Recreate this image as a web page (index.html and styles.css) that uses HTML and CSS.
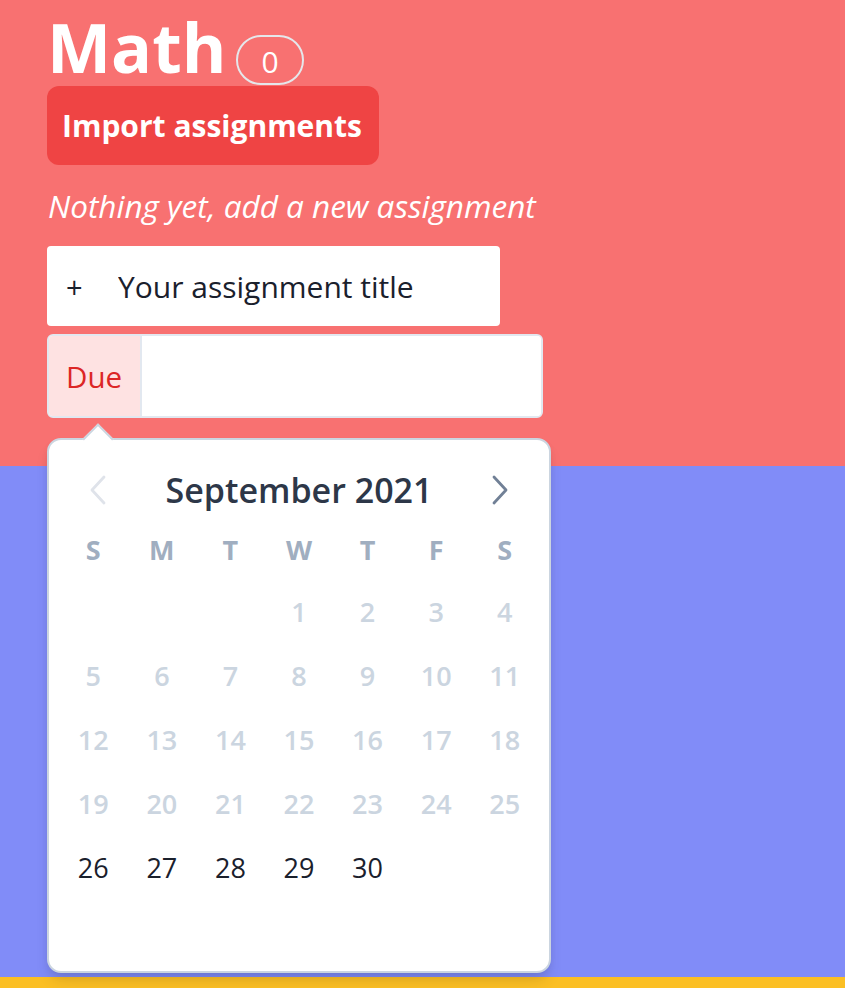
FILE: index.html
```html
<!DOCTYPE html>
<html lang="en">
<head>
<meta charset="utf-8">
<title>Math</title>
<link rel="stylesheet" href="styles.css">
</head>
<body>
<section class="subject subject-red">
  <div class="subject-head">
    <h1 class="subject-title">Math</h1>
    <span class="count-badge">0</span>
  </div>
  <button class="import-btn" type="button">Import assignments</button>
  <p class="empty-note">Nothing yet, add a new assignment</p>
  <form class="new-assignment">
    <label class="title-field">
      <span class="plus">+</span>
      <input class="title-input" type="text" placeholder="Your assignment title">
    </label>
    <div class="due-wrap">
      <div class="due-field">
        <span class="due-label">Due</span>
        <input class="due-input" type="text">
      </div>
      <div class="datepicker">
        <div class="dp-arrow"></div>
        <div class="dp-header">
          <button class="dp-nav dp-prev" type="button" aria-label="Previous month">
            <svg width="18" height="30" viewBox="0 0 18 30"><path d="M15 2 L3 15 L15 28" fill="none" stroke="currentColor" stroke-width="2.8" stroke-linecap="round" stroke-linejoin="round"/></svg>
          </button>
          <div class="dp-month">September 2021</div>
          <button class="dp-nav dp-next" type="button" aria-label="Next month">
            <svg width="18" height="30" viewBox="0 0 18 30"><path d="M3 2 L15 15 L3 28" fill="none" stroke="currentColor" stroke-width="2.8" stroke-linecap="round" stroke-linejoin="round"/></svg>
          </button>
        </div>
        <div class="dp-weekdays">
          <span>S</span><span>M</span><span>T</span><span>W</span><span>T</span><span>F</span><span>S</span>
        </div>
        <div class="dp-days">
          <span></span><span></span><span></span>
          <span class="off">1</span><span class="off">2</span><span class="off">3</span><span class="off">4</span>
          <span class="off">5</span><span class="off">6</span><span class="off">7</span><span class="off">8</span><span class="off">9</span><span class="off">10</span><span class="off">11</span>
          <span class="off">12</span><span class="off">13</span><span class="off">14</span><span class="off">15</span><span class="off">16</span><span class="off">17</span><span class="off">18</span>
          <span class="off">19</span><span class="off">20</span><span class="off">21</span><span class="off">22</span><span class="off">23</span><span class="off">24</span><span class="off">25</span>
          <span>26</span><span>27</span><span>28</span><span>29</span><span>30</span>
        </div>
      </div>
    </div>
  </form>
</section>
<section class="subject subject-blue"></section>
<section class="subject subject-yellow"></section>
</body>
</html>
```

FILE: styles.css
```css
* { box-sizing: border-box; }

html, body {
  margin: 0;
  padding: 0;
}

body {
  font-family: "Open Sans", "Noto Sans", sans-serif;
  color: #1a202c;
  overflow: hidden;
}

.subject {
  padding: 0 47px;
}

.subject-red {
  background: #f87171;
  height: 466px;
  padding-top: 7px;
  position: relative;
  z-index: 2;
}

.subject-blue {
  background: #818cf8;
  height: 511px;
}

.subject-yellow {
  background: #fbbf24;
  height: 60px;
}

.subject-head {
  display: flex;
  align-items: baseline;
  height: 79px;
}

.subject-title {
  margin: 0;
  font-size: 68px;
  line-height: 80px;
  font-weight: 700;
  color: #fff;
}

.count-badge {
  margin-left: 10px;
  border: 2px solid #e5e7eb;
  border-radius: 9999px;
  padding: 7px 23px 3px;
  font-size: 30px;
  line-height: 36px;
  color: #fff;
}

.import-btn {
  display: block;
  width: 332px;
  height: 79px;
  border: 0;
  border-radius: 12px;
  background: #ef4444;
  color: #fff;
  font-family: inherit;
  font-weight: 700;
  font-size: 30px;
  padding: 0 15px;
  text-align: left;
}

.empty-note {
  margin: 22px 0 0 1px;
  font-style: italic;
  font-size: 31.5px;
  line-height: 38px;
  color: #fff;
}

.new-assignment {
  margin-top: 21px;
}

.title-field {
  display: flex;
  align-items: center;
  width: 453px;
  height: 80px;
  background: #fff;
  border-radius: 4px;
  padding-left: 19px;
}

.plus {
  font-size: 29px;
  width: 52px;
  color: #1a202c;
}

.title-input {
  border: 0;
  outline: 0;
  flex: 1;
  min-width: 0;
  font-family: inherit;
  font-size: 30px;
  background: transparent;
  color: #1a202c;
  padding: 0;
}

.title-input::placeholder {
  color: #1a202c;
  opacity: 1;
}

.due-wrap {
  position: relative;
  margin-top: 8px;
  width: 496px;
}

.due-field {
  display: flex;
  height: 84px;
  border: 2px solid #e2e8f0;
  border-radius: 6px;
  overflow: hidden;
  background: #fff;
}

.due-label {
  display: flex;
  align-items: center;
  padding: 0 0 0 17px;
  width: 93px;
  background: #fee2e2;
  color: #dc2626;
  font-size: 29.5px;
  border-right: 2px solid #e2e8f0;
}

.due-input {
  flex: 1;
  border: 0;
  outline: 0;
  font-family: inherit;
  font-size: 28px;
}

.datepicker {
  position: absolute;
  top: 104px;
  left: 0;
  width: 504px;
  height: 535px;
  background: #fff;
  border: 2px solid #cbd5e0;
  border-radius: 14px;
  padding: 10px 10px 10px;
  box-shadow: 0 10px 15px -3px rgba(0,0,0,0.12), 0 4px 8px -2px rgba(0,0,0,0.08);
}

.dp-arrow {
  position: absolute;
  top: -12px;
  left: 38px;
  width: 22px;
  height: 22px;
  background: #fff;
  border-top: 2px solid #cbd5e0;
  border-left: 2px solid #cbd5e0;
  transform: rotate(45deg);
}

.dp-header {
  display: flex;
  align-items: center;
  justify-content: space-between;
  height: 80px;
}

.dp-nav {
  width: 78px;
  height: 60px;
  border: 0;
  background: transparent;
  padding: 0;
  display: flex;
  align-items: center;
  justify-content: center;
}

.dp-prev { color: #dfe3ea; }
.dp-next { color: #718096; }

.dp-month {
  font-size: 34px;
  color: #2d3748;
  font-weight: 600;
}

.dp-weekdays {
  display: grid;
  grid-template-columns: repeat(7, 1fr);
  height: 38px;
  align-items: center;
  text-align: center;
  font-weight: 700;
  font-size: 27px;
  color: #a0aec0;
  margin-bottom: 11px;
}

.dp-days {
  display: grid;
  grid-template-columns: repeat(7, 1fr);
  grid-auto-rows: 64px;
  align-items: center;
  text-align: center;
  font-size: 27px;
  color: #1a202c;
}

.dp-days .off {
  color: #cbd5e0;
  font-weight: 600;
}
```
